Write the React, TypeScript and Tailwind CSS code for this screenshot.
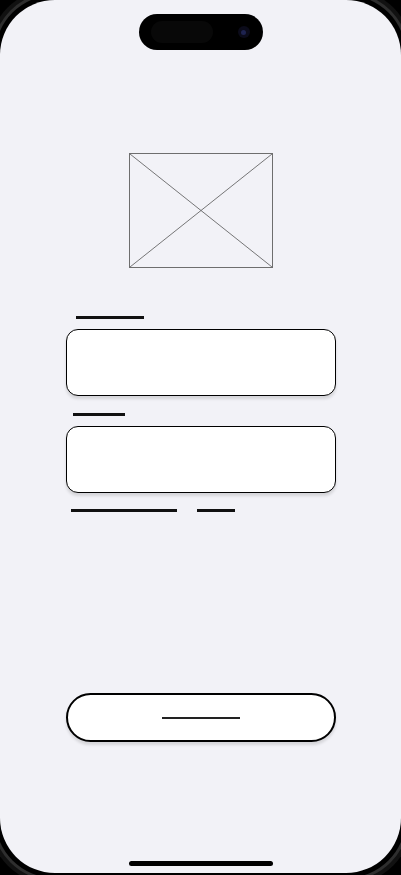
import React from "react";

export default function App() {
  return (
    <div className="w-[401px] h-[875px] bg-black overflow-hidden" style={{ fontFamily: "Inter, 'Liberation Sans', sans-serif" }}>
      <div className="relative w-[401px] h-[873px] rounded-[55px] bg-[#f2f2f7] flex flex-col items-center shadow-[0_0_0_5px_#000,0_0_0_8px_#2e2e2e,0_0_0_12px_#111]">
        {/* Dynamic island */}
        <div className="mt-[14px] w-[124px] h-[36px] rounded-full bg-black flex items-center pl-[12px] pr-[12px] shrink-0">
          <div className="w-[62px] h-[22px] rounded-full bg-[#080808]" />
          <div className="ml-auto mr-[1px] w-[12px] h-[12px] rounded-full bg-[#0b0b1a] flex items-center justify-center">
            <div className="w-[5px] h-[5px] rounded-full bg-[#1e2350]" />
          </div>
        </div>

        {/* Image placeholder */}
        <div className="mt-[103px] w-[144px] h-[115px] border border-[#6e6e6e] shrink-0">
          <svg width="100%" height="100%" viewBox="0 0 142 113" preserveAspectRatio="none" className="block">
            <line x1="0" y1="0" x2="142" y2="113" stroke="#555" strokeWidth="0.8" />
            <line x1="142" y1="0" x2="0" y2="113" stroke="#555" strokeWidth="0.8" />
          </svg>
        </div>

        {/* Form */}
        <div className="w-[270px] flex flex-col mt-[48px] shrink-0">
          <div className="ml-[10px] w-[68px] h-[3px] bg-[#111]" />
          <div className="mt-[10px] h-[67px] rounded-[12px] border border-black bg-white shadow-[0_3px_3px_rgba(0,0,0,0.12)]" />
          <div className="mt-[17px] ml-[7px] w-[52px] h-[3px] bg-[#111]" />
          <div className="mt-[10px] h-[67px] rounded-[12px] border border-black bg-white shadow-[0_3px_3px_rgba(0,0,0,0.12)]" />
          <div className="mt-[16px] flex items-center">
            <div className="ml-[5px] w-[106px] h-[3px] bg-[#111]" />
            <div className="ml-[20px] w-[38px] h-[3px] bg-[#111]" />
          </div>
        </div>

        {/* Button */}
        <div className="mt-[181px] w-[270px] h-[49px] rounded-full border-2 border-black bg-white flex items-center justify-center shadow-[0_3px_3px_rgba(0,0,0,0.12)] shrink-0">
          <div className="w-[78px] h-[2px] bg-[#222]" />
        </div>

        {/* Home indicator */}
        <div className="mt-[119px] w-[144px] h-[5px] rounded-full bg-black shrink-0" />
      </div>
    </div>
  );
}
